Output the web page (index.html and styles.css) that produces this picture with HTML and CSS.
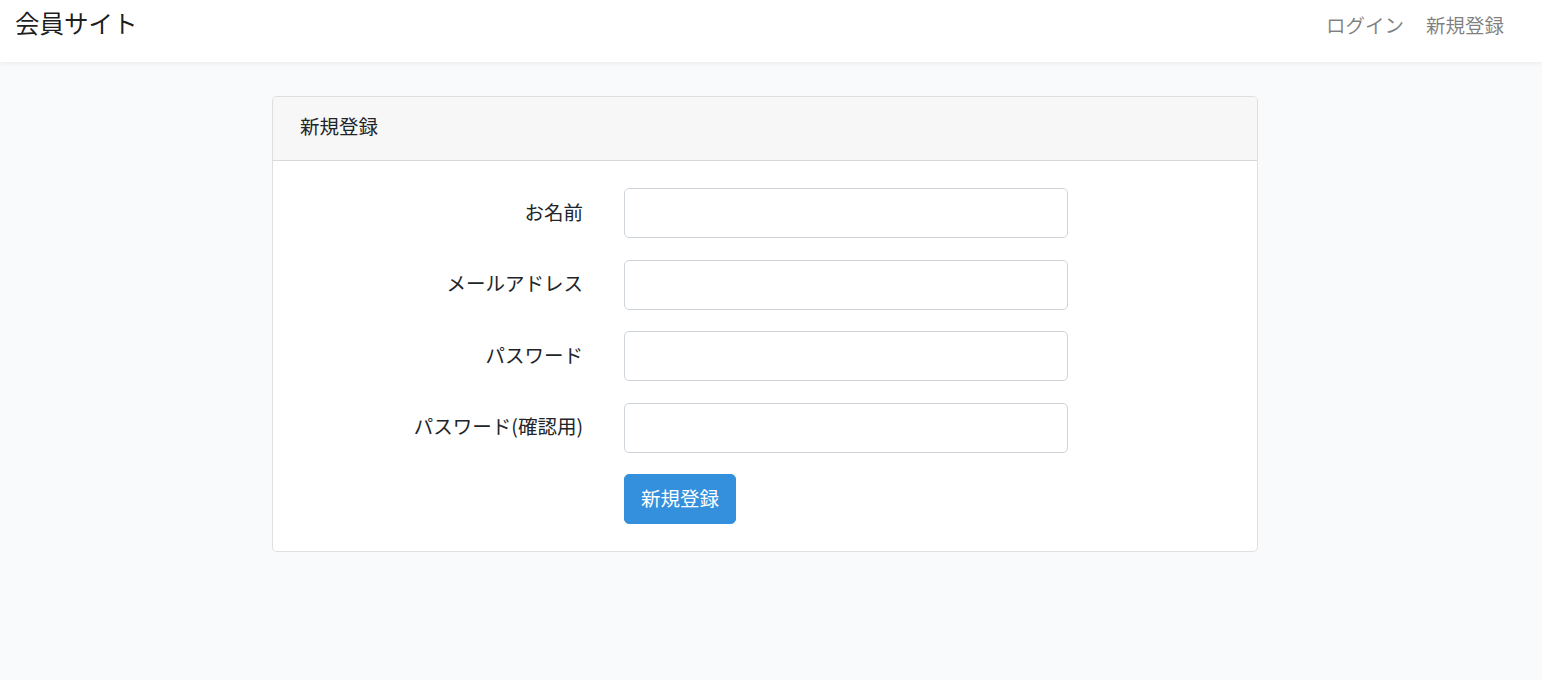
FILE: index.html
```html
<!DOCTYPE html>
<html lang="ja">
<head>
<meta charset="utf-8">
<title>会員サイト</title>
<link rel="stylesheet" href="styles.css">
</head>
<body>
<nav class="navbar">
  <a class="brand" href="#">会員サイト</a>
  <ul class="nav-links">
    <li><a href="#">ログイン</a></li>
    <li><a href="#">新規登録</a></li>
  </ul>
</nav>
<main class="page">
  <div class="card">
    <div class="card-header"><span class="card-title">新規登録</span></div>
    <div class="card-body">
      <form class="form">
        <div class="form-row">
          <label class="form-label" for="name">お名前</label>
          <input class="form-input" id="name" type="text">
        </div>
        <div class="form-row">
          <label class="form-label" for="email">メールアドレス</label>
          <input class="form-input" id="email" type="email">
        </div>
        <div class="form-row">
          <label class="form-label" for="password">パスワード</label>
          <input class="form-input" id="password" type="password">
        </div>
        <div class="form-row">
          <label class="form-label" for="password-confirm">パスワード(確認用)</label>
          <input class="form-input" id="password-confirm" type="password">
        </div>
        <div class="form-row form-row-last">
          <span class="form-label"></span>
          <button class="btn-primary" type="button">新規登録</button>
        </div>
      </form>
    </div>
  </div>
</main>
</body>
</html>
```

FILE: styles.css
```css
* { box-sizing: border-box; }
html, body { margin: 0; padding: 0; }
body {
  background: #f8fafc;
  font-family: "Noto Sans CJK JP", "Noto Sans", sans-serif;
  font-size: 19.5px;
  color: #212529;
  min-height: 680px;
}
a { text-decoration: none; }

.navbar {
  height: 62px;
  background: #fff;
  box-shadow: 0 2px 4px rgba(0, 0, 0, 0.05);
  display: flex;
  align-items: flex-start;
  justify-content: space-between;
  padding: 0 38px 0 15px;
  position: relative;
}
.brand {
  font-size: 24.5px;
  line-height: 1;
  color: rgba(0, 0, 0, 0.9);
  margin-top: 11px;
}
.nav-links {
  list-style: none;
  margin: 15px 0 0;
  padding: 0;
  display: flex;
  gap: 22px;
  line-height: 1;
}
.nav-links a {
  color: rgba(0, 0, 0, 0.5);
  font-size: 19.5px;
}

.page {
  padding: 34px 12px 0 0;
}
.card {
  width: 986px;
  margin: 0 auto;
  background: #fff;
  border: 1px solid rgba(0, 0, 0, 0.125);
  border-radius: 5px;
  overflow: hidden;
}
.card-header {
  height: 64px;
  background: #f7f7f7;
  border-bottom: 1px solid rgba(0, 0, 0, 0.125);
  padding: 0 27px 6px;
  display: flex;
  align-items: center;
  line-height: 1;
}
.card-body {
  padding: 27px 27px 27px;
}
.form-row {
  display: flex;
  align-items: center;
  margin-bottom: 21.5px;
}
.form-row-last { margin-bottom: 0; }
.form-label {
  width: 283px;
  text-align: right;
  margin-right: 41px;
  line-height: 1;
  margin-top: -3px;
}
.form-input {
  width: 444px;
  height: 50px;
  border: 1px solid #ced4da;
  border-radius: 5px;
  background: #fff;
  font: inherit;
  padding: 6px 14px;
}
.btn-primary {
  height: 50px;
  width: 112px;
  background: #3490dc;
  color: #fff;
  border: 1px solid #3490dc;
  border-radius: 5px;
  font: inherit;
  padding: 0 0 3px;
  line-height: 1;
}
```
